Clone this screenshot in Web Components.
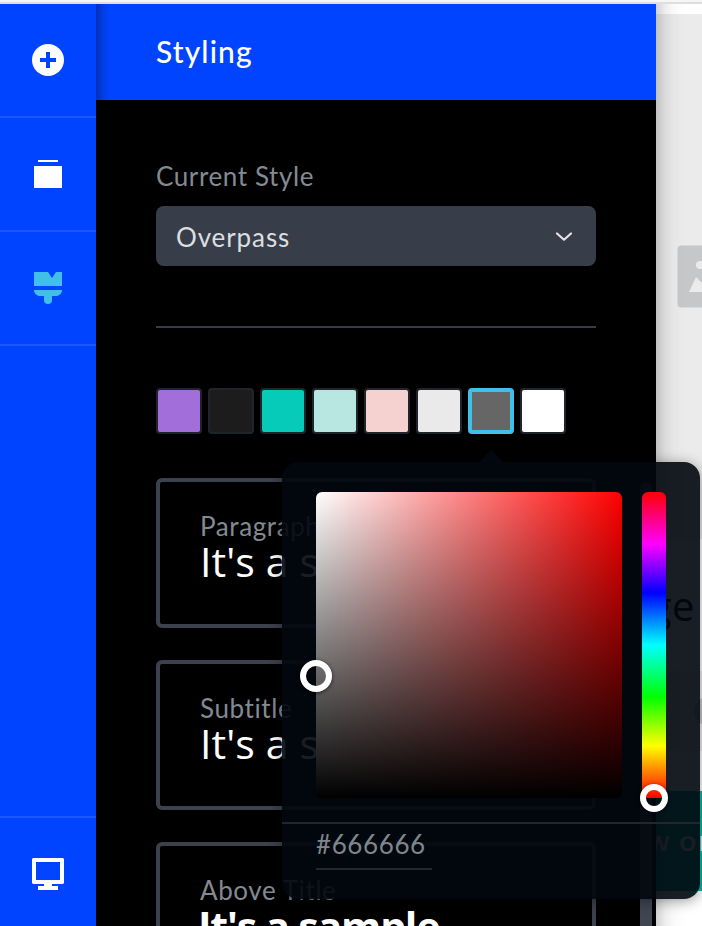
<!DOCTYPE html>
<html lang="en"><head><meta charset="utf-8"><title>Styling</title>
<style>
html,body{margin:0;height:100%;overflow:hidden;background:#fff}
</style></head><body>
<style-editor></style-editor>
<script>
const define=(name,html)=>customElements.define(name,class extends HTMLElement{
  connectedCallback(){
    if(this.shadowRoot)return;
    const r=this.attachShadow({mode:'open'});
    const t=document.createElement('template');
    t.innerHTML=html;
    r.append(t.content.cloneNode(true));
  }
});

define('rail-item',`<style>
:host{display:flex;box-sizing:content-box;height:112px;flex:none;align-items:center;justify-content:center;border-bottom:2px solid #1a57ff;color:#fff}
:host([last]){border-bottom:0;border-top:2px solid #1a57ff;margin-top:auto}
:host([active]){color:#40bfe8}
</style><slot></slot>`);

define('side-rail',`<style>
:host{display:flex;flex-direction:column;width:96px;flex:none;height:926px;background:#0044ff}
svg{display:block}
</style>
<rail-item><svg width="32" height="32" viewBox="0 0 32 32"><circle cx="16" cy="16" r="16" fill="currentColor"/><path d="M14 8h4v6h6v4h-6v6h-4v-6H8v-4h6z" fill="#04f"/></svg></rail-item>
<rail-item><svg width="32" height="32" viewBox="0 0 32 32"><path d="M6 2h20v2H6zM2 8h28v22H2z" fill="currentColor"/></svg></rail-item>
<rail-item active><svg width="32" height="32" viewBox="0 0 32 32"><path d="M2 0h14l4 6 4-6h6v14H2zM2 18h28c0 3.500-3 6-6 6h-4v4a4 4 0 0 1-8 0v-4H8c-3 0-6-2.500-6-6z" fill="currentColor"/></svg></rail-item>
<rail-item last><svg width="32" height="32" viewBox="0 0 32 32"><path fill="currentColor" fill-rule="evenodd" d="M1 0h30l1 1v24l-1 1H20v2h6v4H6v-4h6v-2H1l-1-1V1zM4 4v18h24V4z"/></svg></rail-item>`);

define('panel-header',`<style>
:host{display:flex;box-sizing:border-box;height:96px;flex:none;align-items:center;padding:0 60px 2px;background:#04f linear-gradient(90deg,rgba(0,0,0,.27),rgba(0,0,0,.1) 7px,transparent 14px);color:#fff;font:500 30px/40px Lato,sans-serif;letter-spacing:1.1px}
</style><span><slot></slot></span>`);

define('style-select',`<style>
:host{display:block;color:#838a92;font:26px/32px Lato,sans-serif}
.l{letter-spacing:.6px}
.box{margin-top:14px;height:60px;box-sizing:border-box;border-radius:8px;background:#383e49;display:flex;align-items:center;justify-content:space-between;padding:2px 22px 0 20px;color:#dcdee0;letter-spacing:.9px}
</style><div class="l"><slot name="label"></slot></div><div class="box"><slot></slot><svg width="20" height="12" viewBox="0 0 20 12"><path d="M3 2.500 10 8.700 17 2.500" fill="none" stroke="#e5e5e5" stroke-width="2.200" stroke-linecap="round" stroke-linejoin="round"/></svg></div>`);

define('color-swatch',`<style>
:host{display:block;box-sizing:border-box;width:46px;height:46px;border:2px solid #20252c;border-radius:4px;background:var(--c)}
:host([selected]){border:4px solid #40bfe8}
</style>`);

define('swatch-row',`<style>:host{display:flex;gap:6px}</style><slot></slot>`);

define('sample-card',`<style>
:host{display:block;box-sizing:border-box;height:150px;flex:none;border:4px solid #3b414d;border-radius:6px;padding:26px 40px 0;white-space:nowrap}
.l{font:26px/36px Lato,sans-serif;color:#838a92;letter-spacing:.6px}
.t{font:400 41px/40px "Open Sans",sans-serif;color:#fff;letter-spacing:.1px;margin:-3px 0 0}
:host([bold]) .t{font-weight:700;letter-spacing:-1.2px;margin:-2px 0 0 -2px}
</style><div class="l"><slot name="label"></slot></div><div class="t"><slot></slot></div>`);

define('style-panel',`<style>
:host{display:flex;flex-direction:column;width:560px;flex:none;background:#000;height:922px;overflow:hidden}
.body{display:grid;grid-template-columns:1fr 16px;padding:0 0 0 60px}
.main{width:440px;padding-top:60px}
hr{border:0;height:2px;background:#383e49;margin:60px 0}
.cards{display:flex;flex-direction:column;gap:32px;margin-top:44px}
.bar{width:12px;height:600px;margin-top:382px;border-radius:6px;background:#3f4551}
</style>
<panel-header>Styling</panel-header>
<div class="body"><div class="main">
<style-select><span slot="label">Current Style</span>Overpass</style-select>
<hr>
<swatch-row>
<color-swatch style="--c:#a26fda"></color-swatch><color-swatch style="--c:#1c1c1c"></color-swatch><color-swatch style="--c:#06cbb8"></color-swatch><color-swatch style="--c:#b8e6e0"></color-swatch><color-swatch style="--c:#f5d2d0"></color-swatch><color-swatch style="--c:#eaeaea"></color-swatch><color-swatch selected style="--c:#666"></color-swatch><color-swatch style="--c:#fff"></color-swatch>
</swatch-row>
<div class="cards">
<sample-card><span slot="label">Paragraph</span>It's a sample</sample-card>
<sample-card><span slot="label">Subtitle</span>It's a sample</sample-card>
<sample-card bold><span slot="label">Above Title</span>It's a sample</sample-card>
</div></div><div class="bar"></div></div>`);

define('page-preview',`<style>
:host{display:block;flex:1;min-width:0;height:922px;overflow:hidden;position:relative;background:#fff}
.hero{height:525px;margin-top:10px;background:#ebebeb;display:flex;padding:231px 0 0 21px;box-sizing:border-box}
svg{flex:none}
.title{height:132px;box-sizing:border-box;padding-top:43px;font:40px/48px "Open Sans",sans-serif;color:#000;display:flex;justify-content:flex-end;padding-right:7px;letter-spacing:.5px}
.field{height:80px;background:#f0efed;display:flex;align-items:center;padding-left:38px;box-sizing:border-box}
.dot{width:30px;height:30px;flex:none;border-radius:50%;background:#c8c8c8}
.cta{margin-top:40px;height:100px;background:#06b8a6;color:#eee;font:700 22px/102px "Open Sans",sans-serif;letter-spacing:2px;white-space:nowrap;text-indent:-8px}
.shade{position:absolute;inset:0 auto 0 0;width:30px;background:linear-gradient(90deg,rgba(0,0,0,.18),rgba(0,0,0,.07) 9px,rgba(0,0,0,.02) 18px,transparent)}
</style>
<div class="hero"><svg width="90" height="63" viewBox="0 0 90 63"><rect x=".5" y=".5" width="89" height="62" rx="4" fill="#c6c7c9"/><circle cx="23" cy="20" r="4" fill="#ebebeb"/><path d="M12 47 19 32l8 8 14-22 20 29z" fill="#ebebeb"/></svg></div>
<div class="title">ge</div>
<div class="field"><div class="dot"></div></div>
<div class="cta">W ON</div><div class="shade"></div>`);

define('picker-knob',`<style>
:host{display:block;position:absolute;box-sizing:border-box;width:var(--s);height:var(--s);border:6px solid #fff;border-radius:50%;transform:translate(-50%,-50%);box-shadow:0 1px 4px rgba(0,0,0,.6)}
</style>`);

define('color-popover',`<style>
:host{display:block;position:absolute;left:282px;top:462px;width:418px;height:437px;border-radius:16px;background:rgba(2,7,14,.91);box-shadow:0 2px 14px rgba(0,0,0,.4)}
.tip{position:absolute;left:197px;top:-12px;width:24px;height:12px;background:rgba(3,8,16,.92);clip-path:polygon(50% 0,100% 100%,0 100%)}
.top{display:flex;gap:20px;padding:30px 34px 24px}
.sv{position:relative;width:306px;height:306px;border-radius:6px;background:linear-gradient(to top,#000,transparent),linear-gradient(to right,#fff,#f00)}
.hue{position:relative;width:24px;height:306px;border-radius:6px;background:linear-gradient(#f00,#f0f 17%,#00f 33%,#0ff 50%,#0f0 67%,#ff0 83%,#f00)}
.hex{border-top:2px solid #22272e;padding:0 34px}
.hex div{width:116px;height:44px;border-bottom:2px solid #22272e;color:#7f868e;font:26px/40px Lato,sans-serif;letter-spacing:.6px}
</style><div class="tip"></div>
<div class="top"><div class="sv"><picker-knob style="--s:32px;left:0;top:184px"></picker-knob></div><div class="hue"><picker-knob style="--s:28px;left:12px;top:306px"></picker-knob></div></div>
<div class="hex"><div>#666666</div></div>`);

define('style-editor',`<style>
:host{display:block;width:702px;height:926px;overflow:hidden;position:relative}
.edge{height:4px;background:linear-gradient(#f6f6f6 50%,#dedede 50%)}
.row{display:flex}
</style><div class="edge"></div><div class="row"><side-rail></side-rail><style-panel></style-panel><page-preview></page-preview></div><color-popover></color-popover>`);
</script></body></html>
